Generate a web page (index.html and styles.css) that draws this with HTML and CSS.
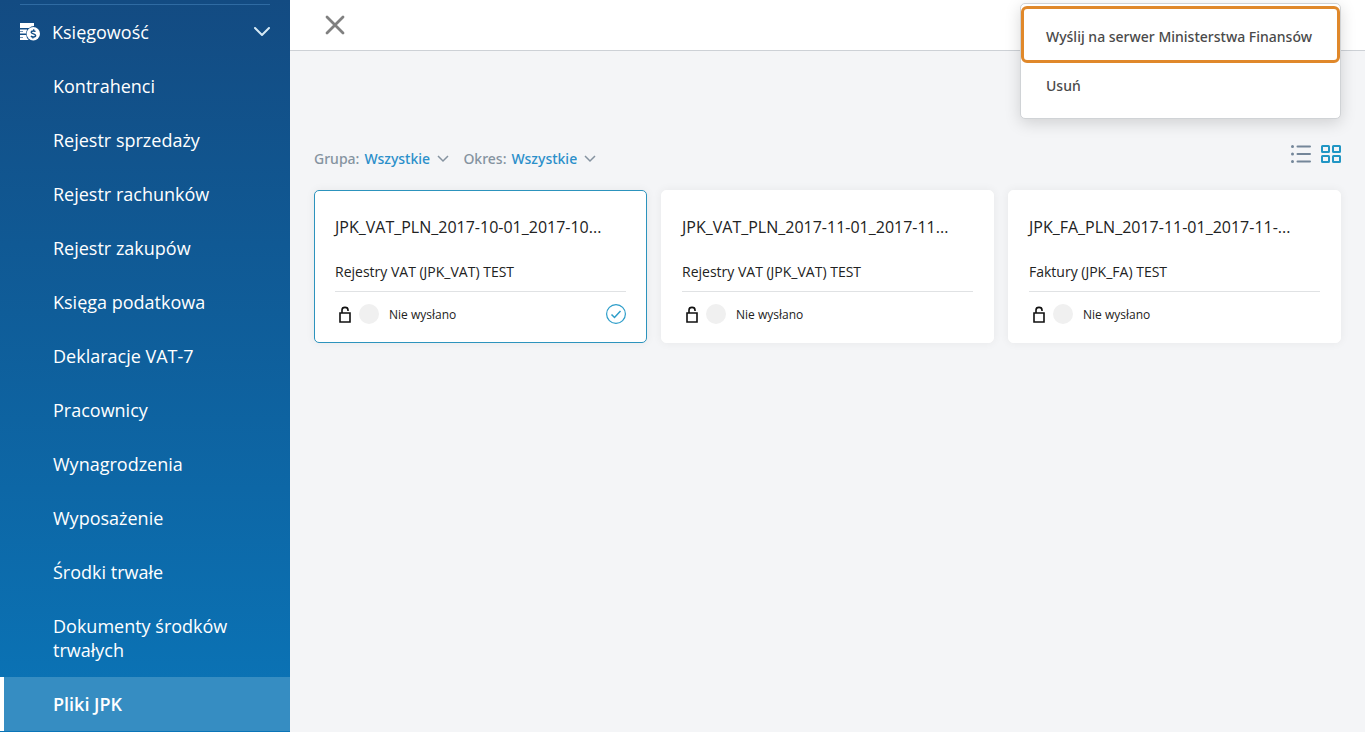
FILE: index.html
```
<!DOCTYPE html>
<html lang="pl">
<head>
  <meta charset="UTF-8">
  <meta name="viewport" content="width=device-width, initial-scale=1.0">
  <title>Pliki JPK</title>
  <link rel="stylesheet" href="styles.css">
</head>
<body>

  <!-- Menu boczne -->
  <nav class="sidebar">
    <button class="section" type="button" aria-expanded="true">
      <svg class="section-icon" width="20" height="18" viewBox="0 0 20 18">
        <path fill="#fff" d="M0 0h14v3a7.500 7.500 0 0 0-5 2H0zM0 6.500h7.200a7 7 0 0 0-1 4H0zM0 12h6.200a7 7 0 0 0 2.500 5H0z"/>
        <path d="M0 8.500h3M0 14.500h3" stroke="#124f86" stroke-width=".6"/>
        <circle cx="13.300" cy="10.700" r="6.700" fill="#fff"/>
        <path d="M15.400 8.700c-.6-1-4.200-1.300-4.200.6 0 2 4.400 1.200 4.400 3.200 0 2-3.800 1.700-4.600.5M13.800 6.300l-.3 1.500M13 13.800l-.3 1.500" fill="none" stroke="#124f86" stroke-width="1.500"/>
      </svg>
      <span>Księgowość</span>
      <svg class="section-arrow" width="16" height="10" viewBox="0 0 16 10"><path d="M1 1l7 7 7-7" fill="none" stroke="#d5e9f5" stroke-width="2" stroke-linecap="round" stroke-linejoin="round"/></svg>
    </button>
    <ul class="menu">
      <li><a href="#">Kontrahenci</a></li>
      <li><a href="#">Rejestr sprzedaży</a></li>
      <li><a href="#">Rejestr rachunków</a></li>
      <li><a href="#">Rejestr zakupów</a></li>
      <li><a href="#">Księga podatkowa</a></li>
      <li><a href="#">Deklaracje VAT-7</a></li>
      <li><a href="#">Pracownicy</a></li>
      <li><a href="#">Wynagrodzenia</a></li>
      <li><a href="#">Wyposażenie</a></li>
      <li><a href="#">Środki trwałe</a></li>
      <li><a href="#">Dokumenty środków trwałych</a></li>
      <li><a href="#" class="active">Pliki JPK</a></li>
    </ul>
  </nav>

  <div class="page">
    <header class="topbar">
      <button class="close" type="button" aria-label="Zamknij">
        <svg width="20" height="20" viewBox="0 0 20 20"><path d="M2 2l16 16M18 2L2 18" fill="none" stroke="#808080" stroke-width="2.800" stroke-linecap="round"/></svg>
      </button>

      <!-- Rozwinięte menu akcji -->
      <div class="actions">
        <button class="action highlighted" type="button">Wyślij na serwer Ministerstwa Finansów</button>
        <button class="action" type="button">Usuń</button>
      </div>
    </header>

    <main class="content">
      <div class="toolbar">
        <div class="filter">
          <label for="grupa">Grupa:</label>
          <select id="grupa"><option>Wszystkie</option></select>
          <svg width="12" height="8" viewBox="0 0 12 8"><path d="M1 1l5 5 5-5" fill="none" stroke="#8593a0" stroke-width="1.500"/></svg>
        </div>
        <div class="filter">
          <label for="okres">Okres:</label>
          <select id="okres"><option>Wszystkie</option></select>
          <svg width="12" height="8" viewBox="0 0 12 8"><path d="M1 1l5 5 5-5" fill="none" stroke="#8593a0" stroke-width="1.500"/></svg>
        </div>
        <div class="views">
          <button type="button" aria-label="Lista">
            <svg width="20" height="18" viewBox="0 0 20 18"><path d="M1.500 1.500h0M1.500 9h0M1.500 16.500h0" stroke="#748699" stroke-width="3" stroke-linecap="round"/><path d="M6.500 1.500h12.500M6.500 9h12.500M6.500 16.500h12.500" stroke="#748699" stroke-width="2" stroke-linecap="round"/></svg>
          </button>
          <button type="button" aria-label="Kafelki">
            <svg width="20" height="18" viewBox="0 0 20 18" fill="none" stroke="#2196c4" stroke-width="2"><rect x="1" y="1" width="7" height="6" rx=".5"/><rect x="12" y="1" width="7" height="6" rx=".5"/><rect x="1" y="11" width="7" height="6" rx=".5"/><rect x="12" y="11" width="7" height="6" rx=".5"/></svg>
          </button>
        </div>
      </div>

      <div class="cards">
        <article class="card selected">
          <h2>JPK_VAT_PLN_2017-10-01_2017-10...</h2>
          <p class="kind">Rejestry VAT (JPK_VAT) TEST</p>
          <div class="status">
            <svg class="lock" width="12" height="17" viewBox="0 0 12 17"><path d="M1 7h10v9H1zM3 7V4c0-3.500 6-3.500 6 0v1" fill="none" stroke="#111" stroke-width="1.600"/></svg>
            <span class="dot"></span>
            <span>Nie wysłano</span>
            <svg class="check" width="20" height="20" viewBox="0 0 20 20" fill="none" stroke="#2c9dc9"><circle cx="10" cy="10" r="9.400" stroke-width="1.200"/><path d="M5.500 10.500l3 3 6-6.500" stroke-width="1.500"/></svg>
          </div>
        </article>
        <article class="card">
          <h2>JPK_VAT_PLN_2017-11-01_2017-11...</h2>
          <p class="kind">Rejestry VAT (JPK_VAT) TEST</p>
          <div class="status">
            <svg class="lock" width="12" height="17" viewBox="0 0 12 17"><path d="M1 7h10v9H1zM3 7V4c0-3.500 6-3.500 6 0v1" fill="none" stroke="#111" stroke-width="1.600"/></svg>
            <span class="dot"></span>
            <span>Nie wysłano</span>
          </div>
        </article>
        <article class="card">
          <h2>JPK_FA_PLN_2017-11-01_2017-11-...</h2>
          <p class="kind">Faktury (JPK_FA) TEST</p>
          <div class="status">
            <svg class="lock" width="12" height="17" viewBox="0 0 12 17"><path d="M1 7h10v9H1zM3 7V4c0-3.500 6-3.500 6 0v1" fill="none" stroke="#111" stroke-width="1.600"/></svg>
            <span class="dot"></span>
            <span>Nie wysłano</span>
          </div>
        </article>
      </div>
    </main>
  </div>

</body>
</html>
```
FILE: styles.css
```
* {
  box-sizing: border-box;
}

body {
  margin: 0;
  display: flex;
  min-height: 100vh;
  background: #f4f5f7;
  font-family: "Open Sans", sans-serif;
  font-size: 14px;
  color: #222;
}

button,
select {
  font: inherit;
  color: inherit;
  background: none;
  border: none;
  padding: 0;
  cursor: pointer;
}

svg {
  display: block;
  flex-shrink: 0;
}

/* Menu boczne */
.sidebar {
  width: 290px;
  flex-shrink: 0;
  padding-top: 4px;
  background: linear-gradient(#134b82, #0a75b8);
  color: #fff;
  font-size: 18px;
  line-height: 24px;
}

.section {
  display: flex;
  align-items: center;
  width: 250px;
  height: 55px;
  margin: 0 20px;
  border-top: 1px solid #2f6ba3;
}

.section-icon {
  margin-right: 12px;
}

.section-arrow {
  margin-left: auto;
}

.menu {
  list-style: none;
  margin: 0;
  padding: 0;
}

.menu a {
  display: block;
  padding: 15px 50px 15px 49px;
  border-left: 4px solid transparent;
  color: #fff;
  text-decoration: none;
}

.menu .active {
  background: #368dc2;
  border-left-color: #fff;
  font-weight: 600;
}

/* Górny pasek */
.page {
  flex: 1;
  min-width: 0;
}

.topbar {
  position: relative;
  display: flex;
  align-items: center;
  height: 51px;
  padding-left: 35px;
  background: #fff;
  border-bottom: 1px solid #cdd1d6;
}

.actions {
  position: absolute;
  top: 3px;
  right: 24px;
  width: 321px;
  padding: 2px 0 10px;
  background: #fff;
  border: 1px solid #d0d3d6;
  border-radius: 5px;
  box-shadow: 0 4px 16px rgba(0, 0, 0, 0.15);
}

.action {
  display: block;
  width: 100%;
  height: 45px;
  padding: 0 25px;
  color: #4a4a4a;
  font-family: "Noto Sans", sans-serif;
  font-weight: 500;
  text-align: left;
}

.highlighted {
  height: 57px;
  padding: 4px 22px 0;
  border: 3px solid #e0882a;
  border-radius: 6px;
}

/* Filtry */
.content {
  padding: 92px 24px 24px;
}

.toolbar {
  display: flex;
  align-items: center;
  gap: 14px;
  height: 30px;
  margin-bottom: 17px;
  color: #8593a0;
  font-family: "Noto Sans", sans-serif;
  font-weight: 500;
}

.filter {
  display: flex;
  align-items: center;
  gap: 5px;
}

.filter select {
  appearance: none;
  color: #2a8fca;
}

.filter svg {
  margin: 2px 0 0 2px;
}

.views {
  display: flex;
  align-self: flex-start;
  gap: 10px;
  margin: 2px 0 0 auto;
}

/* Kafelki */
.cards {
  display: grid;
  grid-template-columns: repeat(3, 1fr);
  gap: 14px;
}

.card {
  padding: 24px 20px 16px;
  background: #fff;
  border: 1px solid #fff;
  border-radius: 5px;
  box-shadow: 0 0 10px rgba(0, 0, 0, 0.06);
}

.selected {
  border-color: #2c93bd;
}

.card h2 {
  margin: 0 0 21px;
  font-size: 16px;
  font-weight: 400;
  line-height: 24px;
  white-space: nowrap;
}

.kind {
  margin: 0;
  padding-bottom: 7px;
  line-height: 24px;
  border-bottom: 1px solid #e0e2e4;
}

.status {
  display: flex;
  align-items: center;
  height: 34px;
  padding-top: 10px;
  font-size: 12px;
}

.lock {
  margin: 0 8px 0 4px;
}

.dot {
  width: 20px;
  height: 20px;
  margin-right: 10px;
  border-radius: 50%;
  background: #f0f0f0;
}

.check {
  margin-left: auto;
}
```
